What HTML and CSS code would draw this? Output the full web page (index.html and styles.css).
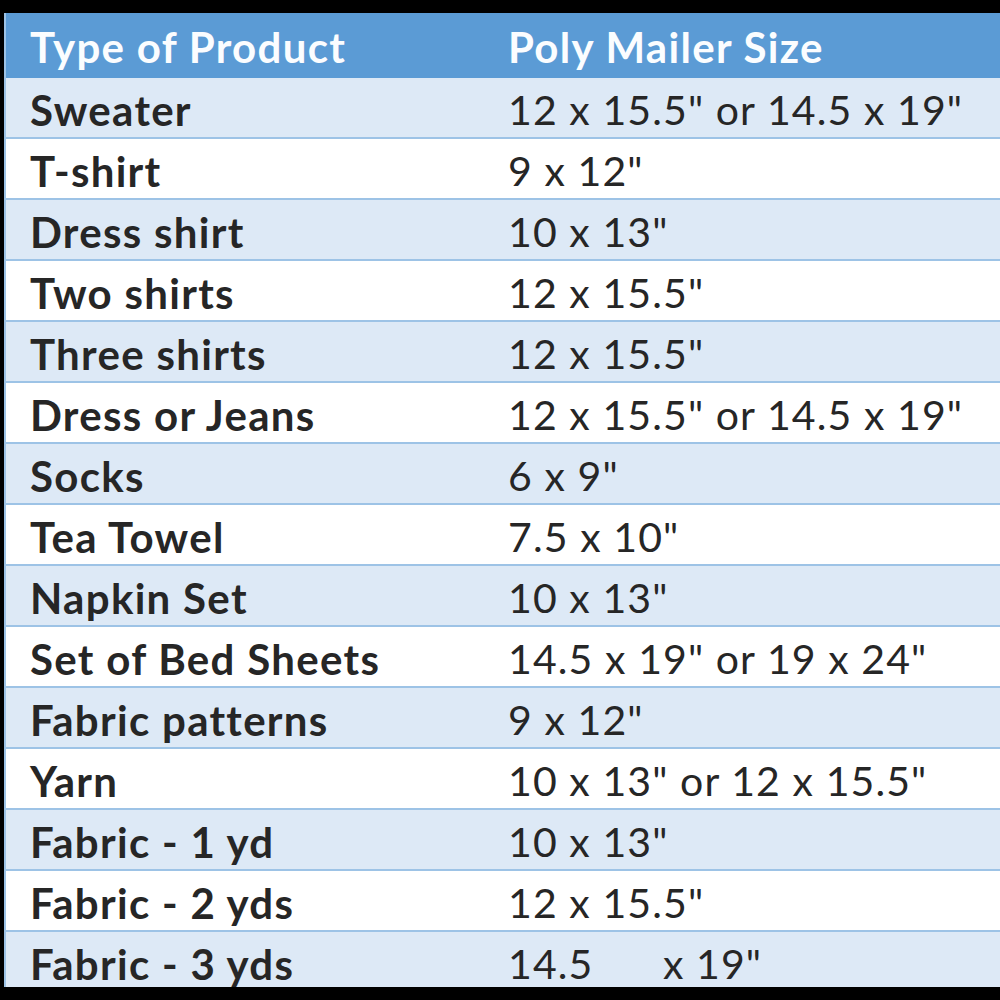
FILE: index.html
```html
<!DOCTYPE html>
<html>
<head>
<meta charset="utf-8">
<link rel="stylesheet" href="styles.css">
</head>
<body>
<div class="frame">
  <div class="table">
    <div class="row head"><div class="c1">Type of Product</div><div class="c2">Poly Mailer Size</div></div>
    <div class="row alt"><div class="c1">Sweater</div><div class="c2">12 x 15.5" or 14.5 x 19"</div></div>
    <div class="row"><div class="c1">T-shirt</div><div class="c2">9 x 12"</div></div>
    <div class="row alt"><div class="c1">Dress shirt</div><div class="c2">10 x 13"</div></div>
    <div class="row"><div class="c1">Two shirts</div><div class="c2">12 x 15.5"</div></div>
    <div class="row alt"><div class="c1">Three shirts</div><div class="c2">12 x 15.5"</div></div>
    <div class="row"><div class="c1">Dress or Jeans</div><div class="c2">12 x 15.5" or 14.5 x 19"</div></div>
    <div class="row alt"><div class="c1">Socks</div><div class="c2">6 x 9"</div></div>
    <div class="row"><div class="c1">Tea Towel</div><div class="c2">7.5 x 10"</div></div>
    <div class="row alt"><div class="c1">Napkin Set</div><div class="c2">10 x 13"</div></div>
    <div class="row"><div class="c1">Set of Bed Sheets</div><div class="c2">14.5 x 19" or 19 x 24"</div></div>
    <div class="row alt"><div class="c1">Fabric patterns</div><div class="c2">9 x 12"</div></div>
    <div class="row"><div class="c1">Yarn</div><div class="c2">10 x 13" or 12 x 15.5"</div></div>
    <div class="row alt"><div class="c1">Fabric - 1 yd</div><div class="c2">10 x 13"</div></div>
    <div class="row"><div class="c1">Fabric - 2 yds</div><div class="c2">12 x 15.5"</div></div>
    <div class="row alt"><div class="c1">Fabric - 3 yds</div><div class="c2 pre">14.5      x 19"</div></div>
  </div>
</div>
</body>
</html>
```
FILE: styles.css
```css
html, body {
  margin: 0;
  padding: 0;
  background: #000;
}
.frame {
  width: 1000px;
  height: 1000px;
  box-sizing: border-box;
  padding: 13px 0 13px 4px;
  overflow: hidden;
}
.table {
  height: 974px;
  overflow: hidden;
  background: #fff;
  border-left: 2px solid #9dc3e6;
  font-family: "Lato", "Open Sans", sans-serif;
  color: #262626;
}
.row {
  display: grid;
  grid-template-columns: 478px 1fr;
  height: 61px;
  box-sizing: border-box;
  padding-top: 4px;
  border-bottom: 2px solid #9dc3e6;
  align-items: center;
  background: #fff;
}
.row.alt {
  background: #dde9f6;
}
.row.head {
  height: 65px;
  padding-top: 3px;
  background: #5b9bd5;
  color: #fbfdff;
  border-bottom: none;
}
.c1 {
  padding-left: 24px;
  font-weight: 700;
  font-size: 42px;
  letter-spacing: 1.3px;
  white-space: nowrap;
}
.c2 {
  padding-left: 24px;
  font-weight: 400;
  font-size: 41px;
  letter-spacing: 1.1px;
  white-space: nowrap;
}
.head .c2 {
  font-weight: 700;
  font-size: 42px;
  letter-spacing: 1.3px;
}
.pre {
  white-space: pre;
}
```
